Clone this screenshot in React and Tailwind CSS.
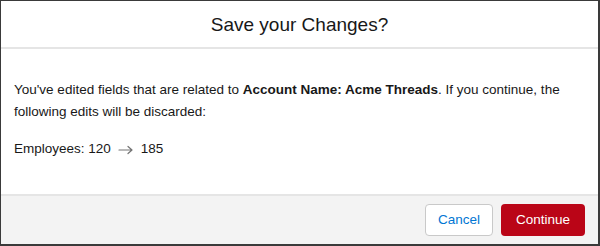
export default function App() {
  return (
    <div className="w-[600px] h-[246px] bg-white font-['Liberation_Sans',Arial,sans-serif] text-[#181818]">
      <div className="flex h-full flex-col border border-[#3a3a3a] border-r-2 border-b-2">
        <div className="flex h-[48px] items-center justify-center border-b-2 border-[#e5e5e5]">
          <h2 className="text-[19px] leading-none">Save your Changes?</h2>
        </div>
        <div className="flex-1 px-[13px] pt-[30px] text-[13.5px] leading-[22px]">
          <p>
            You've edited fields that are related to <b className="font-bold">Account Name: Acme Threads</b>. If you
            continue, the following edits will be discarded:
          </p>
          <p className="mt-[15px] flex items-center">
            <span>Employees: 120</span>
            <svg className="mx-[7px] mt-[2px]" width="16" height="10" viewBox="0 0 16 10" fill="none">
              <path d="M1 5h13M10 1.5L14 5l-4 3.5" stroke="#747474" strokeWidth="1.2" strokeLinecap="round" strokeLinejoin="round" />
            </svg>
            <span>185</span>
          </p>
        </div>
        <div className="flex h-[50px] items-center justify-end gap-[8px] border-t-2 border-[#e5e5e5] bg-[#f3f3f3] pr-[13px]">
          <button className="h-[32px] rounded-[4px] border border-[#c9c9c9] bg-white px-[12px] text-[13.5px] text-[#0176d3]">
            Cancel
          </button>
          <button className="h-[32px] rounded-[4px] bg-[#ba0517] px-[15px] text-[13.5px] text-white">
            Continue
          </button>
        </div>
      </div>
    </div>
  )
}
